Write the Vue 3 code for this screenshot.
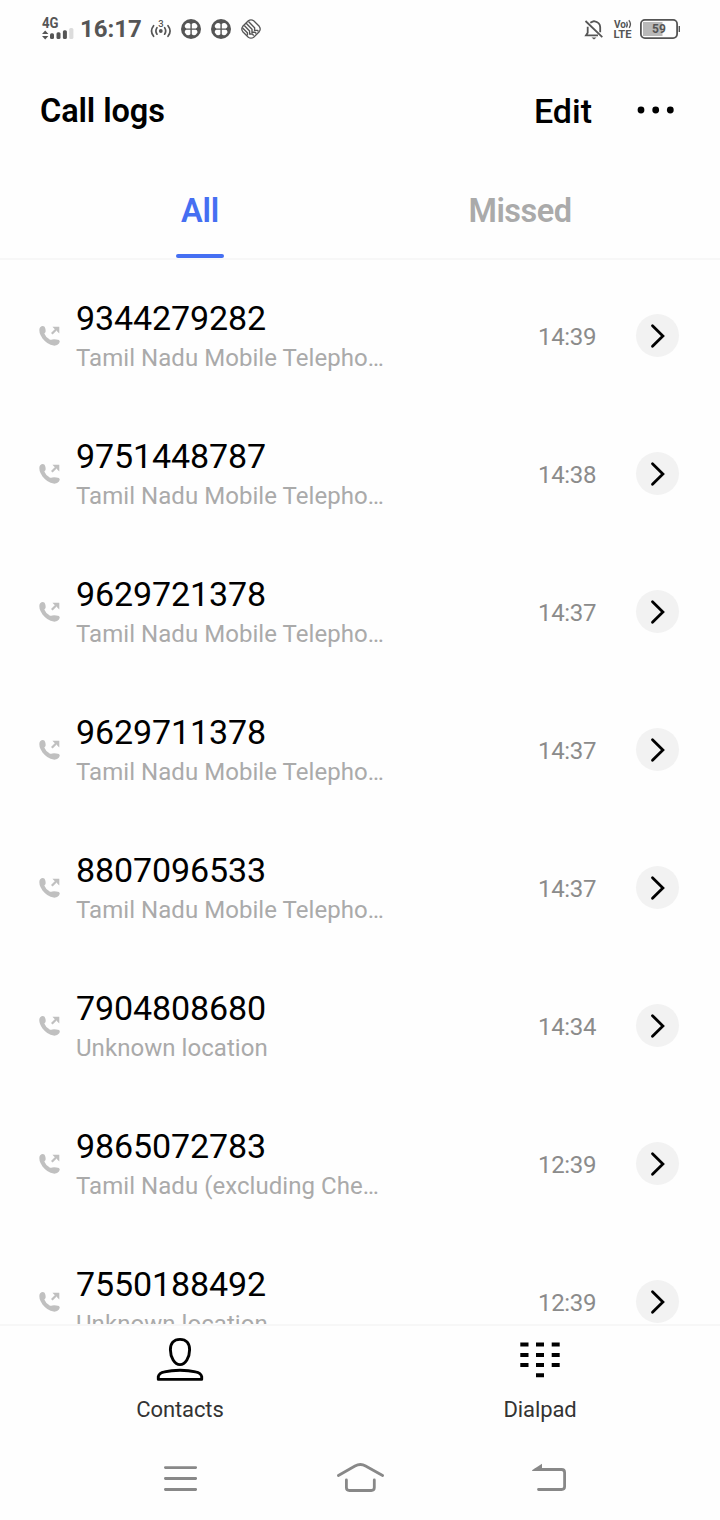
<script setup>
import { ref } from "vue";

const activeTab = ref("all");

const tabs = [
    { key: "all", label: "All" },
    { key: "missed", label: "Missed" },
];

const tamilNadu = "Tamil Nadu Mobile Telepho…";

const calls = [
    { number: "9344279282", location: tamilNadu, time: "14:39" },
    { number: "9751448787", location: tamilNadu, time: "14:38" },
    { number: "9629721378", location: tamilNadu, time: "14:37" },
    { number: "9629711378", location: tamilNadu, time: "14:37" },
    { number: "8807096533", location: tamilNadu, time: "14:37" },
    { number: "7904808680", location: "Unknown location", time: "14:34" },
    { number: "9865072783", location: "Tamil Nadu (excluding Che…", time: "12:39" },
    { number: "7550188492", location: "Unknown location", time: "12:39" },
];
</script>

<template>
    <div class="screen">
        <!-- status bar -->
        <div class="status-bar">
            <svg class="signal" width="33" height="26" viewBox="0 0 33 26">
                <text x="0" y="12.2" font-size="14" font-weight="700" textLength="16.5" lengthAdjust="spacingAndGlyphs">4G</text>
                <path d="M0 18L3.2 14.4L6.4 18ZM0 19.9L3.2 23.5L6.4 19.9Z" />
                <rect x="8" y="17.3" width="4" height="5.8" rx="1.5" />
                <rect x="14.5" y="16.2" width="4" height="6.9" rx="1.5" />
                <rect x="20.9" y="14.2" width="4" height="8.9" rx="1.5" />
                <rect class="weak" x="27.2" y="12" width="4.2" height="11.1" rx="1.5" />
            </svg>
            <span class="clock">16:17</span>
            <svg class="hotspot" width="22" height="20" viewBox="0 0 22 20">
                <text x="11" y="8" font-size="9.5" font-weight="500" text-anchor="middle">3</text>
                <circle cx="10.8" cy="12" r="1.9" />
                <path class="line" d="M7 8.6Q4.8 12 7 15.2M14.6 8.6Q16.8 12 14.6 15.2M3.6 6.7Q-.6 12 3.6 17.3M18 6.7Q22.2 12 18 17.3" stroke-width="1.7" stroke-linecap="round" />
            </svg>
            <svg v-for="n in 2" :key="n" class="clover" width="20" height="20" viewBox="0 0 20 20">
                <circle cx="10" cy="10" r="10" />
                <g class="petals">
                    <path d="M9.4 9.4H5.4A2.2 2.2 0 0 1 4.5 5.6A2.9 2.9 0 0 1 9.4 5Z" />
                    <path d="M10.8 9.4H14.8A2.2 2.2 0 0 0 15.7 5.6A2.9 2.9 0 0 0 10.8 5Z" />
                    <path d="M9.4 10.8H5.4A2.2 2.2 0 0 0 4.5 14.6A2.9 2.9 0 0 0 9.4 15.2Z" />
                    <path d="M10.8 10.8H14.8A2.2 2.2 0 0 1 15.7 14.6A2.9 2.9 0 0 1 10.8 15.2Z" />
                </g>
            </svg>
            <svg class="diamond" width="20" height="20" viewBox="0 0 20 20">
                <path class="line" d="M7.3 1.8Q10 -.2 12.7 1.8L18.2 7.3Q20.2 10 18.2 12.7L12.7 18.2Q10 20.2 7.3 18.2L1.8 12.7Q-.2 10 1.8 7.3Z" stroke-width="1.3" />
                <path class="line" d="M7.5 2.5L13.6 8.7V11.4H16.5L17.5 12.5M5.2 4.3L11 10.3V13.2H14L15.3 14.6M3.3 6.6L8.6 12V15H11.4L12.7 16.6M1.6 9L6.4 13.8V16.5" stroke-width="1.4" />
            </svg>

            <svg class="mute" width="20" height="21" viewBox="0 0 20 21">
                <path class="line" d="M1.5 2L18.3 18.2M3.7 7.8V13.8L2 16.4H14M6.3 3.8Q8 2.8 10 2.2Q16.2 3.4 16.2 8.2V13.2" stroke-width="1.8" />
                <path d="M7.5 18.6H12.5L10 20.4Z" />
            </svg>
            <svg class="volte" width="20" height="20" viewBox="0 0 20 20">
                <text x="1" y="8.6" font-size="10" font-weight="700" textLength="12" lengthAdjust="spacingAndGlyphs">Vo</text>
                <text x=".5" y="19" font-size="11" font-weight="700" textLength="18" lengthAdjust="spacingAndGlyphs">LTE</text>
                <path class="line" d="M13.7 2.8Q15 5.5 13.5 8.5M15.8 1.2Q18.8 4.5 16.2 8.9" stroke-width="1.3" />
            </svg>
            <svg class="battery" width="40" height="20" viewBox="0 0 40 20">
                <rect class="charge" x="3" y="3" width="19.5" height="14" />
                <rect class="line" x=".9" y=".9" width="36.2" height="18.2" rx="4" stroke-width="1.8" />
                <rect x="38.6" y="7" width="1.4" height="6" />
                <text x="19" y="14.2" font-size="12" font-weight="700" text-anchor="middle">59</text>
            </svg>
        </div>

        <!-- title row -->
        <header class="header">
            <h1>Call logs</h1>
            <button class="edit">Edit</button>
            <button class="more">
                <svg width="38" height="10" viewBox="0 0 38 10">
                    <circle cx="4" cy="4" r="3.4" />
                    <circle cx="18.7" cy="4" r="3.4" />
                    <circle cx="33.3" cy="4" r="3.4" />
                </svg>
            </button>
        </header>

        <nav class="tabs">
            <button
                v-for="tab in tabs"
                :key="tab.key"
                class="tab"
                :class="{ active: activeTab === tab.key }"
                @click="activeTab = tab.key"
            >
                {{ tab.label }}
            </button>
        </nav>

        <!-- call list -->
        <ul class="list">
            <li v-for="call in calls" :key="call.number" class="row">
                <svg class="outgoing" width="22" height="22" viewBox="0 0 22 22">
                    <path d="M1.2 2.2Q3.5 .1 5.6 1.8Q6.9 4.4 6.7 6.2Q6.5 7.4 5.3 8.4Q6.5 11.8 11 14.8Q12 15 13.2 14.4Q15.6 13.7 20 15Q21.6 16.3 20 18.5Q18.3 20.9 14.5 20.6Q8.5 19.8 3.5 13.5Q-.8 7 .6 3.2Z" />
                    <path d="M12 8L17 3L18.6 4.6L13.6 9.6Z" />
                    <path d="M13.4 1.8H20.3V8.4L17.8 5.9V4.1H15.6Z" />
                </svg>
                <div class="info">
                    <div class="number">{{ call.number }}</div>
                    <div class="location">{{ call.location }}</div>
                </div>
                <span class="time">{{ call.time }}</span>
                <button class="detail">
                    <svg width="43" height="43" viewBox="0 0 43 43">
                        <path d="M16.5 11.7L26.9 21.9L16.5 32.2" fill="none" stroke="#000" stroke-width="2.8" stroke-linecap="round" />
                    </svg>
                </button>
            </li>
        </ul>

        <!-- bottom actions -->
        <footer class="bottom">
            <div class="action">
                <svg width="48" height="46" viewBox="0 0 48 46" fill="none" stroke="#000" stroke-width="2.9">
                    <path d="M24 2.4C30.5 2.4 33.6 6.7 33.6 12.8C33.6 20.2 29.5 27.6 24 27.6C18.5 27.6 14.4 20.2 14.4 12.8C14.4 6.7 17.5 2.4 24 2.4Z" />
                    <path d="M2.3 42.4V39.5Q3.2 36 8.5 34.9Q15 33.2 24 33.2Q33 33.2 39.5 34.9Q44.8 36 45.7 39.5V42.4Z" stroke-linejoin="round" />
                </svg>
                <span>Contacts</span>
            </div>
            <div class="action">
                <svg width="48" height="46" viewBox="0 0 48 46">
                    <path d="M4.3 5.6H12.5V9.6H4.3ZM20 5.6H28V9.6H20ZM35.7 5.6H43.7V9.6H35.7ZM4.3 16H12.5V20H4.3ZM20 16H28V20H20ZM35.7 16H43.7V20H35.7ZM4.3 26H12.5V30H4.3ZM20 26H28V30H20ZM35.7 26H43.7V30H35.7ZM20 36.2H28V40.2H20Z" />
                </svg>
                <span>Dialpad</span>
            </div>
        </footer>

        <!-- system navigation -->
        <div class="sys-nav">
            <svg width="48" height="36" viewBox="0 0 48 36">
                <path d="M9.4 5.6H39.7M9.4 16.5H39.7M9.4 27.5H39.7" />
            </svg>
            <svg width="48" height="36" viewBox="0 0 48 36">
                <path d="M2.4 13.5L19 4Q24.4 1 29.6 4L46.6 13.5M10.4 18V25.5Q10.4 28.5 13.4 28.5H35.3Q38.3 28.5 38.3 25.5V18" />
            </svg>
            <svg width="48" height="36" viewBox="0 0 48 36">
                <path d="M20 7.5H45.6Q48.6 7.5 48.6 10.5V24.5Q48.6 27.5 45.6 27.5H22.5" />
                <path class="solid" d="M16 8.3L26 1.8V8.9H16.4Z" />
            </svg>
        </div>
    </div>
</template>

<style>
body {
    background: #fefefe;
}
</style>

<style scoped>
.screen {
    display: flex;
    flex-direction: column;
    width: 720px;
    height: 1520px;
    overflow: hidden;
    background: #fefefe;
    color: #000;
    font-family: Roboto, sans-serif;
}

svg {
    display: block;
    flex-shrink: 0;
    overflow: visible;
}

button {
    padding: 0;
    border: none;
    background: none;
    color: inherit;
    font-family: inherit;
}

/* status bar */
.status-bar {
    display: flex;
    align-items: center;
    height: 58px;
    padding: 0 40px 0 42px;
    box-sizing: border-box;
    color: #555;
}

.status-bar svg {
    fill: #555;
}

.status-bar .line {
    fill: none;
    stroke: #555;
}

.status-bar .weak {
    fill: #dcdcdc;
}

.status-bar .charge {
    fill: #b9b9b9;
}

.status-bar .petals {
    fill: #fefefe;
}

.signal {
    margin-right: 5px;
}

.clock {
    width: 70px;
    font-size: 24px;
    font-weight: 700;
    letter-spacing: 0;
}

.hotspot {
    margin-right: 9px;
}

.clover {
    margin-right: 10px;
}

.mute {
    margin-left: auto;
    margin-right: 9px;
}

.volte {
    margin-right: 7px;
}

/* header */
.header {
    display: flex;
    align-items: center;
    height: 106px;
    padding: 0 45px 0 40px;
}

.header h1 {
    margin: 0;
    flex: 1;
    font-size: 32.5px;
    font-weight: 600;
    letter-spacing: -0.1px;
}

.edit {
    font-size: 34px;
    font-weight: 500;
}

.more {
    margin-left: 45px;
}

/* tabs */
.tabs {
    display: flex;
    height: 94px;
    padding: 0 40px;
    border-bottom: 2px solid #f7f7f7;
}

.tab {
    display: flex;
    flex: 1;
    flex-direction: column;
    align-items: center;
    justify-content: space-between;
    padding-top: 28px;
    color: #aaa;
    font-size: 32.5px;
    font-weight: 600;
    letter-spacing: -0.5px;
}

.tab::after {
    content: "";
    width: 48px;
    height: 4px;
    border-radius: 2px;
}

.tab.active {
    color: #456ff2;
    letter-spacing: -0.2px;
}

.tab.active::after {
    background: #456ff2;
}

/* call list */
.list {
    height: 1057px;
    flex-shrink: 0;
    margin: 0;
    padding: 7px 0 0;
    overflow: hidden;
    list-style: none;
}

.row {
    display: flex;
    align-items: center;
    height: 138px;
    padding: 0 41px 0 39px;
}

.outgoing {
    fill: #c0c0c0;
}

.info {
    flex: 1;
    padding-top: 3px;
    margin-left: 15px;
}

.number {
    font-size: 34px;
    line-height: 41px;
    letter-spacing: -0.1px;
}

.location {
    color: #aaa;
    font-size: 24px;
    line-height: 38px;
    letter-spacing: 0.05px;
}

.time {
    width: 59px;
    padding-top: 2px;
    color: #8b8b8b;
    font-size: 24px;
    letter-spacing: -0.35px;
}

.detail {
    width: 43px;
    height: 43px;
    margin: 0 0 1px 39px;
    border-radius: 50%;
    background: #f2f2f2;
}

/* bottom actions */
.bottom {
    display: flex;
    height: 112px;
    border-top: 2px solid #f7f7f7;
}

.action {
    display: flex;
    flex: 1;
    flex-direction: column;
    align-items: center;
    padding-top: 11px;
    color: #333;
    font-size: 22px;
}

.action span {
    margin-top: 14px;
    letter-spacing: -0.1px;
}

/* system navigation */
.sys-nav {
    display: flex;
    justify-content: space-between;
    padding: 24px 156px 0;
}

.sys-nav path {
    fill: none;
    stroke: #888;
    stroke-width: 2.8;
    stroke-linecap: round;
}

.sys-nav .solid {
    fill: #888;
    stroke: none;
}
</style>
